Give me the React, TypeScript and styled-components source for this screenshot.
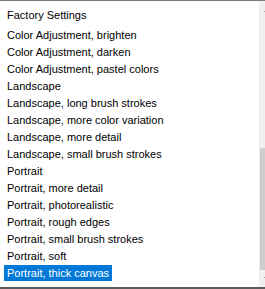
import React from 'react';
import styled, { createGlobalStyle } from 'styled-components';

const GlobalStyle = createGlobalStyle`
  html, body {
    margin: 0;
    padding: 0;
    overflow: hidden;
    background: #fff;
  }
`;

const Frame = styled.div`
  display: flex;
  width: 276px;
  height: 289px;
  box-sizing: border-box;
  border-top: 1px solid #7a7a7a;
  border-bottom: 2px solid #5a5a5a;
  background: #fff;
`;

const List = styled.div`
  flex: 1;
  display: flex;
  flex-direction: column;
  padding: 6px 0 0 4px;
  font-family: 'Liberation Sans', Arial, sans-serif;
  font-size: 11px;
  color: #000;
`;

const Row = styled.div<{ header?: boolean }>`
  height: 16px;
  margin-bottom: ${(props) => (props.header ? '4px' : '1px')};
  display: flex;
`;

const Item = styled.span<{ selected?: boolean }>`
  padding: 0 3px;
  line-height: 16px;
  white-space: nowrap;
  background: ${(props) => (props.selected ? '#0078d7' : 'transparent')};
  color: ${(props) => (props.selected ? '#fff' : '#000')};
`;

const ScrollBar = styled.div`
  width: 17px;
  display: flex;
  flex-direction: column;
  background: #f0f0f0;
`;

const ArrowButton = styled.div`
  height: 17px;
  display: flex;
  align-items: center;
  justify-content: center;
`;

const Track = styled.div`
  flex: 1;
  display: flex;
  flex-direction: column;
  justify-content: flex-end;
`;

const Thumb = styled.div`
  height: 122px;
  margin: 0 1px;
  background: #cdcdcd;
`;

const items = [
  'Color Adjustment, brighten',
  'Color Adjustment, darken',
  'Color Adjustment, pastel colors',
  'Landscape',
  'Landscape, long brush strokes',
  'Landscape, more color variation',
  'Landscape, more detail',
  'Landscape, small brush strokes',
  'Portrait',
  'Portrait, more detail',
  'Portrait, photorealistic',
  'Portrait, rough edges',
  'Portrait, small brush strokes',
  'Portrait, soft',
  'Portrait, thick canvas',
];

const Chevron: React.FC<{ down?: boolean }> = ({ down }) => (
  <svg width="7" height="4" viewBox="0 0 7 4">
    <path
      d={down ? 'M0.5 0.5 L3.5 3.5 L6.5 0.5' : 'M0.5 3.5 L3.5 0.5 L6.5 3.5'}
      fill="none"
      stroke="#606060"
      strokeWidth="1"
    />
  </svg>
);

export default function App() {
  return (
    <>
      <GlobalStyle />
      <Frame>
        <List>
          <Row header>
            <Item>Factory Settings</Item>
          </Row>
          {items.map((label, i) => (
            <Row key={label}>
              <Item selected={i === items.length - 1}>{label}</Item>
            </Row>
          ))}
        </List>
        <ScrollBar>
          <ArrowButton>
            <Chevron />
          </ArrowButton>
          <Track>
            <Thumb />
          </Track>
          <ArrowButton>
            <Chevron down />
          </ArrowButton>
        </ScrollBar>
      </Frame>
    </>
  );
}
